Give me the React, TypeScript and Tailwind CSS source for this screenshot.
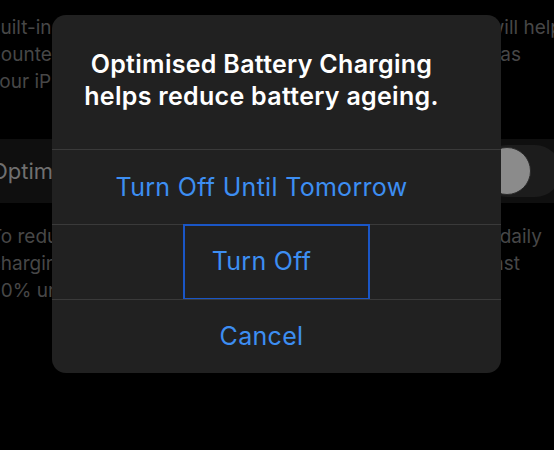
import React from "react";

export default function App() {
  const bgText = "text-[19px] leading-[27px] text-[#474747] whitespace-nowrap";
  const btn = "text-[#3d8ef2] text-[25px] tracking-[0.3px]";
  return (
    <div
      className="relative w-[554px] h-[450px] overflow-hidden bg-black"
      style={{ fontFamily: "Inter, 'Noto Sans', 'Liberation Sans', sans-serif" }}
    >
      {/* background settings page */}
      <div className="flex flex-col pt-[14px]">
        <div className={`flex justify-between -ml-[12px] -mr-[8px] ${bgText}`}>
          <span>Built-in</span>
          <span>will help</span>
        </div>
        <div className={`flex justify-between -ml-[10px] mr-[33px] ${bgText}`}>
          <span>counteract</span>
          <span>such as</span>
        </div>
        <div className={`flex justify-between -ml-[11px] ${bgText}`}>
          <span>your iPhone</span>
          <span></span>
        </div>

        <div className="mt-[44px] h-[64px] bg-[#0f0f0f] flex items-center justify-between -ml-[9px]">
          <span className="text-[22px] text-[#707070] whitespace-nowrap">Optimised Battery Charging</span>
          <div className="w-[80px] h-[52px] -mr-[7px] rounded-full bg-[#1c1c1c] p-[2px] flex items-center">
            <div className="w-[48px] h-[48px] rounded-full bg-[#8b8b8b] border border-[#2a2a2a]" />
          </div>
        </div>

        <div className="flex flex-col pt-[20px]">
          <div className={`flex justify-between -ml-[10px] mr-[12px] ${bgText} leading-[26.5px]`}>
            <span>To reduce</span>
            <span>daily</span>
          </div>
          <div className={`flex justify-between -ml-[10px] mr-[34px] ${bgText} leading-[26.5px]`}>
            <span>charging</span>
            <span>past</span>
          </div>
          <div className={`flex justify-between -ml-[11px] ${bgText} leading-[26.5px]`}>
            <span>80% until</span>
            <span></span>
          </div>
        </div>
      </div>

      {/* alert */}
      <div className="absolute left-[52px] top-[15px] w-[449px] rounded-[14px] bg-[#212121] flex flex-col">
        <div className="h-[134px] flex items-center justify-center pr-[30px] pb-[4px]">
          <p className="text-center text-white font-semibold text-[25px] leading-[32px] tracking-[0.3px] whitespace-nowrap">
            Optimised Battery Charging
            <br />
            helps reduce battery ageing.
          </p>
        </div>
        <div className="h-[75px] border-t border-[#3a3a3a] flex items-center justify-center pr-[30px] pt-[2px]">
          <span className={btn}>Turn Off Until Tomorrow</span>
        </div>
        <div className="h-[75px] border-t border-[#3a3a3a] flex justify-center">
          <div className="w-[187px] h-[76px] -mt-px border-2 border-[#1a56c6] flex items-center justify-center pr-[30px]">
            <span className={btn}>Turn Off</span>
          </div>
        </div>
        <div className="h-[74px] border-t border-[#3a3a3a] flex items-center justify-center pr-[30px]">
          <span className={btn}>Cancel</span>
        </div>
      </div>
    </div>
  );
}
